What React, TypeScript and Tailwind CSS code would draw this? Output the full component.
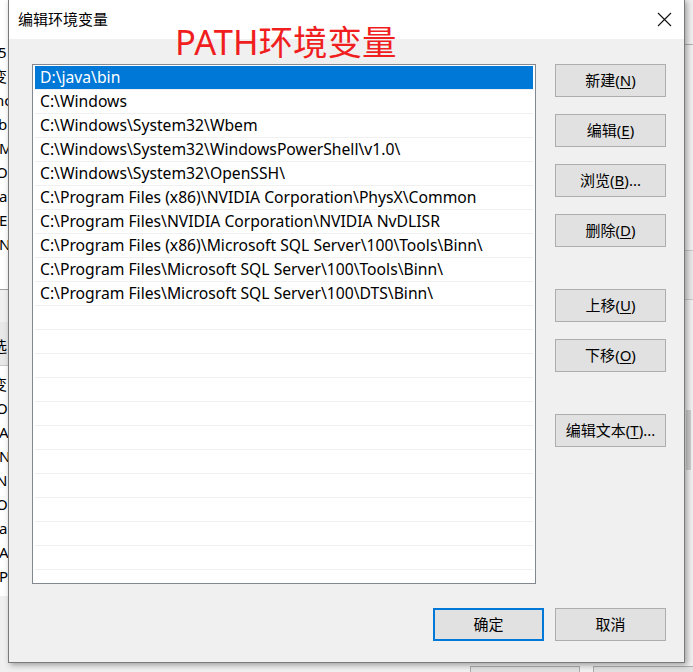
import React from "react";

const paths = [
  "D:\\java\\bin",
  "C:\\Windows",
  "C:\\Windows\\System32\\Wbem",
  "C:\\Windows\\System32\\WindowsPowerShell\\v1.0\\",
  "C:\\Windows\\System32\\OpenSSH\\",
  "C:\\Program Files (x86)\\NVIDIA Corporation\\PhysX\\Common",
  "C:\\Program Files\\NVIDIA Corporation\\NVIDIA NvDLISR",
  "C:\\Program Files (x86)\\Microsoft SQL Server\\100\\Tools\\Binn\\",
  "C:\\Program Files\\Microsoft SQL Server\\100\\Tools\\Binn\\",
  "C:\\Program Files\\Microsoft SQL Server\\100\\DTS\\Binn\\",
];

function Btn({
  label,
  k,
  suffix = "",
  primary = false,
}: {
  label: string;
  k?: string;
  suffix?: string;
  primary?: boolean;
}) {
  return (
    <div
      className={
        "w-[111px] h-[33px] flex items-center justify-center bg-[#e1e1e1] text-[15px] text-black " +
        (primary ? "border-2 border-[#0078d7]" : "border border-[#adadad]")
      }
    >
      <span>
        {label}
        {k ? (
          <>
            (<span className="underline underline-offset-2">{k}</span>)
          </>
        ) : null}
        {suffix}
      </span>
    </div>
  );
}

export default function App() {
  const rows = Array.from({ length: 21 }, (_, i) => paths[i] ?? "");
  return (
    <div
      className="relative w-[693px] h-[672px] overflow-hidden bg-[#f0f0f0]"
      style={{ fontFamily: '"Noto Sans", "Noto Sans CJK SC", sans-serif' }}
    >
      {/* background window (behind the dialog) */}
      <div className="absolute inset-0 bg-[#f0f0f0]">
        <div className="absolute left-0 top-0 w-[10px] h-[290px] bg-white border-b border-[#a0a0a0]" />
        <div className="absolute left-0 top-[40px] flex flex-col text-[15px] leading-[24px] text-black">
          <span className="h-[24px] -ml-[2px]">5</span>
          <span className="h-[24px] -ml-[8px]">变</span>
          <span className="h-[24px] -ml-[5px]">nc</span>
          <span className="h-[24px] -ml-[2px]">b</span>
          <span className="h-[24px] -ml-[1px]">MS</span>
          <span className="h-[24px] -ml-[4px]">Or</span>
          <span className="h-[24px] -ml-[1px]">a</span>
          <span className="h-[24px] -ml-[1px]">E</span>
          <span className="h-[24px] -ml-[1px]">N</span>
        </div>
        <div className="absolute left-0 top-[322px] w-[10px] h-[44px] bg-[#e8e8e8] border-b border-[#c8c8c8]" />
        <div className="absolute left-0 top-[366px] w-[10px] h-[230px] bg-white" />
        <div className="absolute left-0 top-[334px] flex flex-col text-[15px] leading-[24px] text-black">
          <span className="h-[24px] -ml-[8px]">选</span>
        </div>
        <div className="absolute left-0 top-[372px] flex flex-col text-[15px] leading-[24px] text-black">
          <span className="h-[24px] -ml-[8px]">变</span>
          <span className="h-[24px] -ml-[4px]">Or</span>
          <span className="h-[24px] -ml-[1px]">A</span>
          <span className="h-[24px] -ml-[1px]">N</span>
          <span className="h-[24px] -ml-[4px]">NU</span>
          <span className="h-[24px] -ml-[4px]">OS</span>
          <span className="h-[24px] -ml-[1px]">a</span>
          <span className="h-[24px] -ml-[1px]">A</span>
          <span className="h-[24px] -ml-[1px]">P</span>
        </div>
        <div className="absolute right-0 top-[40px] w-[9px] h-[5px] border-b border-[#b0b0b0]" />
        <div className="absolute right-0 top-[250px] w-[9px] h-[50px] bg-[#e8e8e8] border-y border-[#c8c8c8]" />
        <div className="absolute right-[2px] top-[410px] w-[5px] h-[60px] bg-[#cdcdcd]" />
        <div className="absolute left-[470px] top-[666px] w-[110px] h-[10px] bg-[#e1e1e1] border border-[#adadad]" />
        <div className="absolute left-[593px] top-[666px] w-[110px] h-[10px] bg-[#e1e1e1] border border-[#adadad]" />
      </div>

      {/* dialog window */}
      <div className="absolute left-[8px] top-[-1px] w-[677px] h-[664px] flex flex-col bg-[#f0f0f0] border border-[#7a7a7a] shadow-[2px_2px_6px_rgba(0,0,0,0.35)]">
        {/* title bar */}
        <div className="h-[39px] shrink-0 bg-white flex items-center justify-between pl-[9px]">
          <span className="text-[15px] text-black">编辑环境变量</span>
          <div className="w-[46px] h-full flex items-center justify-center mr-[-3px]">
            <svg width="15" height="15" viewBox="0 0 15 15">
              <path d="M1 1 L14 14 M14 1 L1 14" stroke="#111" strokeWidth="1.1" fill="none" />
            </svg>
          </div>
        </div>

        {/* body */}
        <div className="flex-1 flex flex-col pl-[23px] pr-[18px] pt-[25px] pb-[21px]">
          <div className="flex gap-[19px]">
            {/* list */}
            <div className="w-[504px] h-[520px] bg-white border border-[#828790] px-[2px] pt-[1px] overflow-hidden">
              {rows.map((p, i) => (
                <div
                  key={i}
                  className={
                    "h-[24px] flex items-center pl-[5px] text-[15.7px] whitespace-nowrap border-b border-[#f0f0f0] " +
                    (i === 0 ? "bg-[#0078d7] text-white" : "text-black")
                  }
                >
                  {p}
                </div>
              ))}
            </div>
            {/* button column */}
            <div className="flex flex-col">
              <Btn label="新建" k="N" />
              <div className="h-[17px]" />
              <Btn label="编辑" k="E" />
              <div className="h-[17px]" />
              <Btn label="浏览" k="B" suffix="..." />
              <div className="h-[17px]" />
              <Btn label="删除" k="D" />
              <div className="h-[42px]" />
              <Btn label="上移" k="U" />
              <div className="h-[17px]" />
              <Btn label="下移" k="O" />
              <div className="h-[42px]" />
              <Btn label="编辑文本" k="T" suffix="..." />
            </div>
          </div>
          <div className="mt-auto flex justify-end gap-[11px]">
            <Btn label="确定" primary />
            <Btn label="取消" />
          </div>
        </div>
      </div>

      {/* red annotation */}
      <div className="absolute left-[175px] top-[22px] text-[34.5px] leading-[40px] text-[#f01e1e]">
        PATH环境变量
      </div>
    </div>
  );
}
